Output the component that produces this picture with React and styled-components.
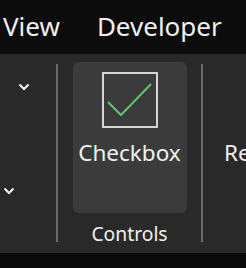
import styled, { createGlobalStyle } from "styled-components";

const GlobalStyle = createGlobalStyle`
    body {
        margin: 0;
        background-color: #0a0a0a;
        font-family: "Noto Sans", "Open Sans", sans-serif;
        overflow: hidden;
    }
`

const Window = styled.div`
    width: 246px;
    height: 268px;
    display: flex;
    flex-direction: column;
    overflow: hidden;
`
const TabBar = styled.div`
    height: 54px;
    flex-shrink: 0;
    display: flex;
    align-items: center;
    gap: 37px;
    padding-left: 3px;
    padding-bottom: 2px;
    box-sizing: border-box;
    background-color: #0c0c0c;
    white-space: nowrap;
`
const Tab = styled.span`
    font-size: 26px;
    color: #f0f0f0;
    line-height: 1;
`
const Ribbon = styled.div`
    height: 199px;
    flex-shrink: 0;
    display: flex;
    background-color: #292929;
    white-space: nowrap;
    overflow: hidden;
`
const Group = styled.div`
    width: ${(props) => props.$width}px;
    flex-shrink: 0;
    display: flex;
    flex-direction: column;
    align-items: center;
`
const ArrowColumn = styled.div`
    width: 56px;
    flex-shrink: 0;
    display: flex;
    flex-direction: column;
`
const Arrow = styled.div`
    margin-left: ${(props) => props.$left}px;
    margin-top: ${(props) => props.$top}px;
    height: 8px;
    display: flex;
`
const Separator = styled.div`
    width: 2px;
    flex-shrink: 0;
    margin: 10px 0 11px;
    background-color: #6a6a6a;
`
const BigButton = styled.div`
    margin-top: 8px;
    width: 114px;
    height: 151px;
    display: flex;
    flex-direction: column;
    align-items: center;
    border-radius: 6px;
    background-color: #3b3b3b;
`
const IconBox = styled.div`
    margin-top: 10px;
    width: 56px;
    height: 56px;
    display: flex;
`
const ButtonLabel = styled.span`
    margin-top: 14px;
    font-size: 22.5px;
    color: #f0f0f0;
    line-height: 1;
`
const GroupLabel = styled.span`
    margin-top: 11px;
    font-size: 19.3px;
    color: #f0f0f0;
    line-height: 1;
`
const PartialGroup = styled.div`
    flex-shrink: 0;
    display: flex;
    flex-direction: column;
    align-items: flex-start;
    padding-left: 21px;
    padding-top: 74px;
`

function Chevron() {
    return (
        <svg width="12" height="8" viewBox="0 0 12 8">
            <path d="M1.5 1.5 L6 6 L10.5 1.5" fill="none" stroke="#f4f4f4" strokeWidth="2" />
        </svg>
    )
}

function CheckboxIcon() {
    return (
        <svg width="56" height="56" viewBox="0 0 56 56">
            <rect x="1" y="1" width="54" height="54" fill="none" stroke="#d6d6d6" strokeWidth="2" />
            <path d="M6 30 L19 43 L49 12" fill="none" stroke="#5dc46f" strokeWidth="2" />
        </svg>
    )
}

function App() {
    return (
        <Window>
            <GlobalStyle />
            <TabBar>
                <Tab>View</Tab>
                <Tab>Developer</Tab>
            </TabBar>
            <Ribbon>
                <ArrowColumn>
                    <Arrow $left={18} $top={29}><Chevron /></Arrow>
                    <Arrow $left={3} $top={96}><Chevron /></Arrow>
                </ArrowColumn>
                <Separator />
                <Group $width={143}>
                    <BigButton>
                        <IconBox><CheckboxIcon /></IconBox>
                        <ButtonLabel>Checkbox</ButtonLabel>
                    </BigButton>
                    <GroupLabel>Controls</GroupLabel>
                </Group>
                <Separator />
                <PartialGroup>
                    <ButtonLabel>Re</ButtonLabel>
                </PartialGroup>
            </Ribbon>
        </Window>
    )
}

export default App;
